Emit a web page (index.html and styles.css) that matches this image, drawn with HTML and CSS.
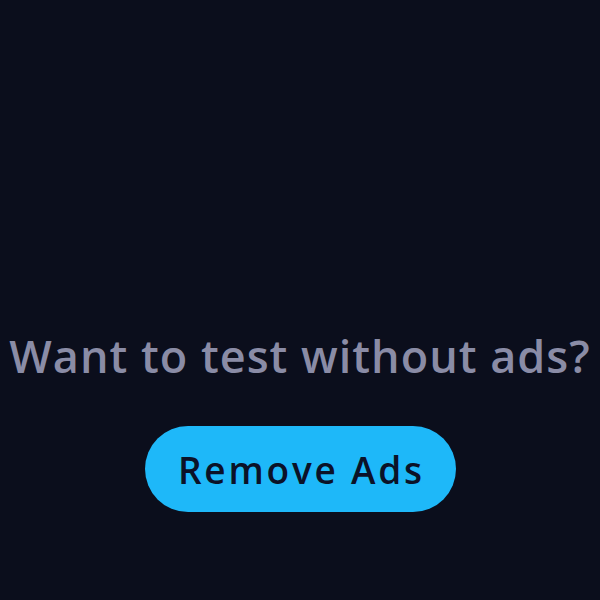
FILE: index.html
```html
<!DOCTYPE html>
<html>
<head>
    <title>Remove Ads</title>
    <link rel="stylesheet" href="styles.css">
</head>
<body>
    <div class="promo">
        <h2 class="promo-title">Want to test without ads?</h2>
        <button class="remove-ads">Remove Ads</button>
    </div>
</body>
</html>
```

FILE: styles.css
```css
html, body {
    margin: 0;
    height: 100%;
}
body {
    background-color: #0b0e1c;
    font-family: "Open Sans", "Liberation Sans", sans-serif;
}
.promo {
    display: flex;
    flex-direction: column;
    align-items: center;
    padding-top: 326px;
}
.promo-title {
    margin: 0;
    font-size: 45px;
    font-weight: 600;
    color: #8a8ca6;
    letter-spacing: 1px;
    line-height: 60px;
    white-space: nowrap;
}
.remove-ads {
    margin-top: 40px;
    width: 311px;
    height: 86px;
    border: none;
    border-radius: 43px;
    background-color: #1eb8f9;
    color: #0b1228;
    font-family: inherit;
    font-size: 37px;
    font-weight: 600;
    letter-spacing: 2.8px;
    text-indent: 2.8px;
}
```
